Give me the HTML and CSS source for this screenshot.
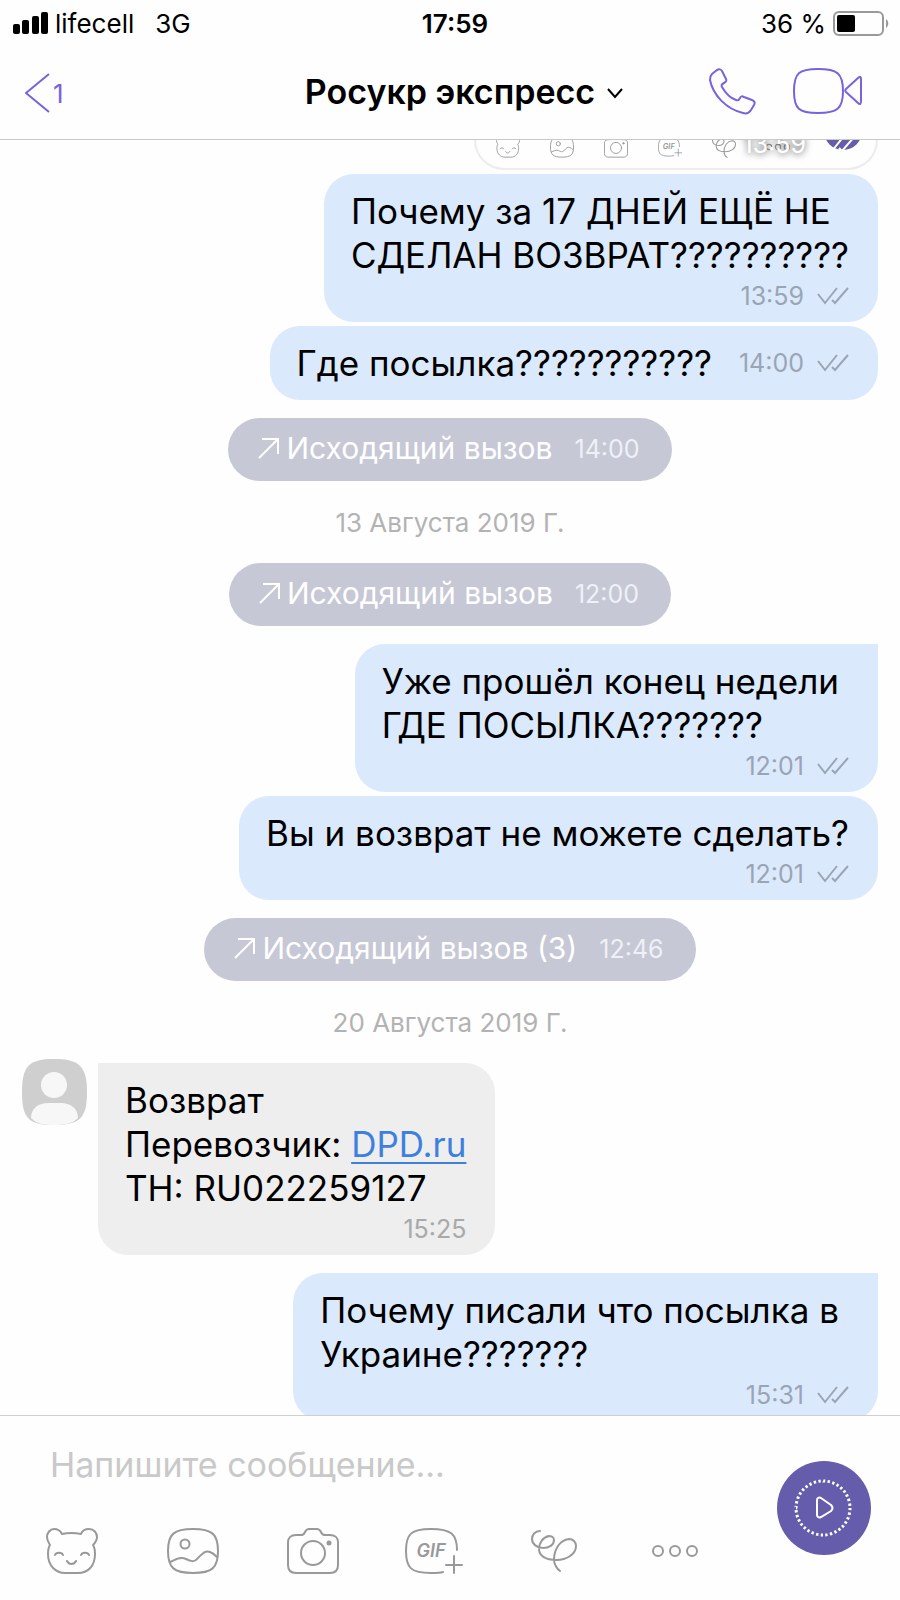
FILE: index.html
```html
<!DOCTYPE html>
<html lang="ru">
<head>
    <meta charset="UTF-8">
    <meta name="viewport" content="width=device-width, initial-scale=1.0">
    <title>Росукр экспресс</title>
    <link rel="stylesheet" href="styles.css">
</head>
<body>

    <!-- Shared icons -->
    <svg class="sprite" aria-hidden="true">
        <symbol id="icon-bear" viewBox="0 0 52 46">
            <path d="M16 6C14 2 11 1 8 1C4 1 1 5 1 9C1 13 3 15 4 17C2 20 2 23 2 26C2 38 10 45 19 45H32C42 45 49 38 49 26C49 23 49 20 47 17C49 15 51 13 51 9C51 5 48 1 43 1C39 1 36 3 35 6C30 5 21 5 16 6Z"/>
            <path d="M9 27C10 24 16 24 17 27M35 27C36 24 42 24 43 27M21 33C23 37 28 37 30 33"/>
        </symbol>
        <symbol id="icon-picture" viewBox="0 0 52 46">
            <path d="M1 23C1 6 7 1 26 1S51 6 51 23S45 45 26 45S1 40 1 23Z"/>
            <circle cx="18" cy="16" r="4.5"/>
            <path d="M3 34C8 32 13 28 19 31C23 33 27 35 31 30C35 26 38 22 43 24C46 25 48 27 50 29"/>
        </symbol>
        <symbol id="icon-camera" viewBox="0 0 52 46">
            <path d="M9 7H14C17 7 17 6 18 4C19 2 20 1 22 1H30C32 1 33 2 34 4C35 6 35 7 38 7H43C48 7 51 10 51 14V37C51 42 48 45 43 45H9C4 45 1 42 1 37V14C1 10 4 7 9 7Z"/>
            <circle cx="26" cy="25" r="12"/>
            <circle class="dot" cx="42" cy="15" r="1.5"/>
        </symbol>
        <symbol id="icon-gif" viewBox="0 0 58 46">
            <path d="M52 22C52 6 46 1 26 1S1 6 1 23S6 45 26 45C31 45 35 45 38 44M49 28V45M41 37H57"/>
            <text class="gif-text" x="26" y="29" text-anchor="middle">GIF</text>
        </symbol>
        <symbol id="icon-doodle" viewBox="0 0 46 42">
            <path d="M9 1C4 1 1 5 1 9C1 14 6 18 12 18C18 18 23 15 23 10C23 7 20 6 18 6C12 7 8 13 8 19C8 26 15 30 25 30C36 30 45 24 45 16C45 12 42 9 38 9C29 10 23 19 23 30C23 34 26 39 29 41"/>
        </symbol>
        <symbol id="icon-more" viewBox="0 0 46 12">
            <circle cx="6" cy="6" r="5"/>
            <circle cx="23" cy="6" r="5"/>
            <circle cx="40" cy="6" r="5"/>
        </symbol>
        <symbol id="icon-read" viewBox="0 0 32 18">
            <path d="M1 7L8 16L20 1M15 13L18 16L31 1"/>
        </symbol>
        <symbol id="icon-outgoing" viewBox="0 0 22 22">
            <path d="M1 21L20 2M4 2H20V17"/>
        </symbol>
    </svg>

    <header class="header">
        <div class="status-bar">
            <div class="status-left">
                <svg class="signal" viewBox="0 0 35 22" aria-hidden="true">
                    <rect x="0" y="12" width="7" height="10" rx="2"/>
                    <rect x="9" y="8" width="7" height="14" rx="2"/>
                    <rect x="19" y="4" width="7" height="18" rx="2"/>
                    <rect x="28" y="0" width="7" height="22" rx="2"/>
                </svg>
                <span>lifecell</span>
                <span class="network">3G</span>
            </div>
            <div class="clock">17:59</div>
            <div class="status-right">
                <span>36 %</span>
                <svg class="battery" viewBox="0 0 56 25" aria-hidden="true">
                    <rect class="battery-case" x="1" y="1" width="49" height="23" rx="5"/>
                    <rect x="4" y="4" width="18" height="17" rx="2"/>
                    <path class="battery-tip" d="M53 8C56 10 56 15 53 17Z"/>
                </svg>
            </div>
        </div>

        <div class="nav">
            <button class="back" type="button" aria-label="Назад">
                <svg class="icon-back" viewBox="0 0 26 40" aria-hidden="true">
                    <path d="M25 1L2 20L25 39"/>
                </svg>
                <span>1</span>
            </button>
            <h1 class="title">
                Росукр экспресс
                <svg class="chevron" viewBox="0 0 16 11" aria-hidden="true">
                    <path d="M1 1L8 9L15 1"/>
                </svg>
            </h1>
            <div class="nav-actions">
                <button type="button" aria-label="Позвонить">
                    <svg class="icon-phone" viewBox="0 0 47 47" aria-hidden="true">
                        <path d="M3 6L8 2C10 1 12 1 13 3L17 11C18 13 17 14 15 15C13 16 12 17 13 19C17 26 21 30 27 32C29 33 30 32 31 30C32 28 33 28 35 29L43 32C46 33 46 35 45 37L42 42C40 45 37 46 34 45C17 41 4 27 1 12C1 9 1 8 3 6Z"/>
                    </svg>
                </button>
                <button type="button" aria-label="Видеозвонок">
                    <svg class="icon-video" viewBox="0 0 70 46" aria-hidden="true">
                        <path d="M1 23C1 5 6 1 25 1S50 5 50 23S44 45 25 45S1 41 1 23Z"/>
                        <path d="M53 21L65 10C67 8 68 9 68 11V33C68 36 67 37 65 35L53 24C52 23 52 22 53 21Z"/>
                    </svg>
                </button>
            </div>
        </div>
    </header>

    <main class="chat">
        <div class="preview">
            <svg class="icon"><use href="#icon-bear"/></svg>
            <svg class="icon"><use href="#icon-picture"/></svg>
            <svg class="icon"><use href="#icon-camera"/></svg>
            <svg class="icon"><use href="#icon-gif"/></svg>
            <svg class="icon"><use href="#icon-doodle"/></svg>
            <svg class="icon"><use href="#icon-more"/></svg>
            <div class="preview-fab"></div>
            <div class="preview-meta">
                <span>13:59</span>
                <svg class="read"><use href="#icon-read"/></svg>
            </div>
        </div>

        <div class="bubble out">
            <p>Почему за 17 ДНЕЙ ЕЩЁ НЕ<br>СДЕЛАН ВОЗВРАТ??????????</p>
            <div class="meta">13:59 <svg class="read"><use href="#icon-read"/></svg></div>
        </div>
        <div class="bubble out inline">
            <p>Где посылка???????????</p>
            <div class="meta">14:00 <svg class="read"><use href="#icon-read"/></svg></div>
        </div>

        <div class="call">
            <svg class="outgoing"><use href="#icon-outgoing"/></svg>
            <span>Исходящий вызов</span>
            <span class="call-time">14:00</span>
        </div>
        <div class="date">13 Августа 2019 Г.</div>
        <div class="call">
            <svg class="outgoing"><use href="#icon-outgoing"/></svg>
            <span>Исходящий вызов</span>
            <span class="call-time">12:00</span>
        </div>

        <div class="bubble out first">
            <p>Уже прошёл конец недели<br>ГДЕ ПОСЫЛКА???????</p>
            <div class="meta">12:01 <svg class="read"><use href="#icon-read"/></svg></div>
        </div>
        <div class="bubble out">
            <p>Вы и возврат не можете сделать?</p>
            <div class="meta">12:01 <svg class="read"><use href="#icon-read"/></svg></div>
        </div>

        <div class="call">
            <svg class="outgoing"><use href="#icon-outgoing"/></svg>
            <span>Исходящий вызов (3)</span>
            <span class="call-time">12:46</span>
        </div>
        <div class="date">20 Августа 2019 Г.</div>

        <div class="incoming">
            <svg class="avatar" viewBox="0 0 65 66" aria-hidden="true">
                <path fill="#cfcfcf" d="M0 33C0 7 7 0 32 0S65 7 65 33S58 66 32 66S0 59 0 33Z"/>
                <circle fill="#f7f7f7" cx="32" cy="26" r="13"/>
                <path fill="#f7f7f7" d="M9 59C9 49 17 44 26 44H39C48 44 56 49 56 59C50 65 43 66 32 66S15 65 9 59Z"/>
            </svg>
            <div class="bubble in">
                <p>Возврат<br>Перевозчик: <a href="#">DPD.ru</a><br>ТН: RU022259127</p>
                <div class="meta">15:25</div>
            </div>
        </div>

        <div class="bubble out first">
            <p>Почему писали что посылка в<br>Украине???????</p>
            <div class="meta">15:31 <svg class="read"><use href="#icon-read"/></svg></div>
        </div>
    </main>

    <footer class="composer">
        <div class="composer-main">
            <input class="message-input" type="text" placeholder="Напишите сообщение..." aria-label="Напишите сообщение">
            <div class="toolbar">
                <button type="button" aria-label="Стикеры"><svg class="icon"><use href="#icon-bear"/></svg></button>
                <button type="button" aria-label="Галерея"><svg class="icon"><use href="#icon-picture"/></svg></button>
                <button type="button" aria-label="Камера"><svg class="icon"><use href="#icon-camera"/></svg></button>
                <button type="button" aria-label="GIF"><svg class="icon icon-wide"><use href="#icon-gif"/></svg></button>
                <button type="button" aria-label="Рисунок"><svg class="icon icon-doodle"><use href="#icon-doodle"/></svg></button>
                <button type="button" aria-label="Ещё"><svg class="icon icon-more"><use href="#icon-more"/></svg></button>
            </div>
        </div>
        <button class="record" type="button" aria-label="Записать видео">
            <svg viewBox="0 0 94 94" aria-hidden="true">
                <circle class="record-ring" cx="46" cy="47" r="27" pathLength="72"/>
                <path d="M40 39C40 37 42 36 44 37L54 44C56 46 56 48 54 50L44 56C42 57 40 56 40 54Z"/>
            </svg>
        </button>
    </footer>

</body>
</html>
```
FILE: styles.css
```css
* {
    margin: 0;
    padding: 0;
    box-sizing: border-box;
}

body {
    font-family: Inter, 'Liberation Sans', sans-serif;
    background-color: #fefefe;
    color: #000;
    height: 100vh;
    display: flex;
    flex-direction: column;
}

button {
    background: none;
    border: none;
    font: inherit;
    color: inherit;
    cursor: pointer;
}

svg {
    display: block;
    flex-shrink: 0;
}

.sprite {
    display: none;
}

/* Header */
.header {
    border-bottom: 1px solid #c8c8c8;
    flex-shrink: 0;
}

.status-bar {
    display: grid;
    grid-template-columns: 1fr auto 1fr;
    align-items: center;
    height: 46px;
    padding: 0 3px 0 13px;
    font-size: 26px;
}

.status-left, .status-right {
    display: flex;
    align-items: center;
    gap: 7px;
}

.status-right {
    justify-content: flex-end;
    padding-right: 8px;
}

.signal {
    width: 35px;
    height: 22px;
}

.network {
    margin-left: 14px;
}

.clock {
    font-weight: 600;
}

.battery {
    width: 56px;
    height: 25px;
}

.battery-case {
    fill: none;
    stroke: #999;
    stroke-width: 2;
}

.battery-tip {
    fill: #999;
}

.nav {
    display: flex;
    align-items: center;
    height: 93px;
    padding: 0 37px 3px 24px;
}

.back {
    display: flex;
    align-items: center;
    gap: 3px;
    flex: 0 0 195px;
    padding-top: 4px;
    font-size: 26px;
    color: #7863dc;
}

.icon-back {
    width: 26px;
    height: 40px;
}

.title {
    display: flex;
    align-items: center;
    justify-content: center;
    gap: 12px;
    flex: 1;
    font-size: 34px;
    font-weight: 600;
    white-space: nowrap;
}

.chevron {
    width: 16px;
    height: 11px;
    margin-top: 4px;
    fill: none;
    stroke: #000;
    stroke-width: 2;
}

.nav-actions {
    display: flex;
    align-items: center;
    gap: 37px;
}

.icon-back, .icon-phone, .icon-video {
    fill: none;
    stroke: #7863dc;
    stroke-width: 2;
    stroke-linejoin: round;
}

.icon-phone {
    width: 47px;
    height: 47px;
}

.icon-video {
    width: 70px;
    height: 46px;
}

/* Messages */
.chat {
    flex: 1;
    min-height: 0;
    overflow: hidden;
    display: flex;
    flex-direction: column;
    padding: 0 22px;
}

.chat > * {
    flex-shrink: 0;
}

.preview {
    position: relative;
    align-self: flex-end;
    display: flex;
    align-items: flex-end;
    gap: 30px;
    width: 404px;
    height: 30px;
    padding: 0 20px 10px;
    border: 2px solid #ececec;
    border-top: none;
    border-radius: 0 0 36px 36px;
    overflow: hidden;
}

.preview .icon {
    width: 24px;
    height: 22px;
}

.preview-fab {
    position: absolute;
    right: 14px;
    bottom: 18px;
    width: 38px;
    height: 38px;
    border-radius: 50%;
    background-color: #665cac;
}

.preview-meta {
    position: absolute;
    right: 20px;
    bottom: 10px;
    display: flex;
    align-items: center;
    gap: 18px;
    font-size: 25px;
    line-height: 28px;
    color: #fff;
    text-shadow: 0 1px 7px rgba(0, 0, 0, 0.7);
}

.bubble {
    padding: 15px 29px 12px 27px;
    border-radius: 30px;
    font-size: 35px;
    line-height: 44px;
    white-space: nowrap;
}

.out {
    align-self: flex-end;
    margin-top: 4px;
    background-color: #dbe9fd;
}

.in {
    background-color: #eee;
    border-top-left-radius: 0;
}

.in a {
    color: #3e80dd;
    text-decoration-thickness: 2px;
    text-underline-offset: 5px;
}

.first {
    margin-top: 18px;
    border-top-right-radius: 0;
}

.first p {
    padding-right: 10px;
}

.meta {
    display: flex;
    align-items: center;
    justify-content: flex-end;
    gap: 13px;
    margin-top: 5px;
    font-size: 25px;
    line-height: 28px;
    color: #9aa5b4;
}

.in .meta {
    color: #a9a9a9;
}

.inline {
    display: flex;
    align-items: center;
    gap: 27px;
    padding-bottom: 15px;
}

.inline .meta {
    margin-top: 0;
}

.read {
    width: 32px;
    height: 18px;
    fill: none;
    stroke: currentColor;
    stroke-width: 2;
}

.call {
    align-self: center;
    display: flex;
    align-items: center;
    height: 63px;
    margin-top: 18px;
    padding: 0 32px 4px 30px;
    border-radius: 32px;
    background-color: #c6c8d6;
    color: #fff;
    font-size: 30px;
}

.outgoing {
    width: 22px;
    height: 22px;
    margin-right: 6px;
    fill: none;
    stroke: #fff;
    stroke-width: 2;
}

.call-time {
    margin-left: 22px;
    padding-top: 2px;
    font-size: 25px;
    color: #eff0f8;
}

.date {
    margin-top: 19px;
    height: 45px;
    line-height: 45px;
    text-align: center;
    font-size: 26px;
    color: #b3b3b3;
}

.incoming {
    display: flex;
    align-items: flex-start;
    gap: 11px;
    margin-top: 14px;
}

.incoming .bubble {
    margin-top: 4px;
}

.avatar {
    width: 65px;
    height: 66px;
}

/* Composer */
.composer {
    display: flex;
    align-items: center;
    gap: 42px;
    flex-shrink: 0;
    height: 185px;
    padding: 0 29px 0 12px;
    border-top: 1px solid #ccd2d2;
}

.composer-main {
    flex: 1;
}

.message-input {
    display: block;
    width: 100%;
    height: 60px;
    padding: 0 38px;
    border: none;
    outline: none;
    background: none;
    font-family: inherit;
    font-size: 34px;
}

.message-input::placeholder {
    color: #c9c9c9;
    opacity: 1;
}

.toolbar {
    display: grid;
    grid-template-columns: repeat(6, 1fr);
    margin-top: 28px;
    padding-bottom: 2px;
}

.toolbar button {
    display: flex;
    align-items: center;
    justify-content: center;
    height: 58px;
}

.icon {
    width: 52px;
    height: 46px;
    fill: none;
    stroke: #999;
    stroke-width: 2;
    stroke-linecap: round;
    stroke-linejoin: round;
}

.icon-wide {
    width: 58px;
}

.icon-doodle {
    width: 46px;
    height: 42px;
}

.icon-more {
    width: 46px;
    height: 12px;
}

.dot, .gif-text {
    fill: #999;
}

.gif-text {
    stroke: none;
    font-size: 18px;
    font-style: italic;
    font-weight: 600;
}

.record {
    width: 94px;
    height: 94px;
    border-radius: 50%;
    background-color: #665cac;
}

.record svg {
    width: 94px;
    height: 94px;
    fill: none;
    stroke: #fff;
    stroke-width: 2;
}

.record .record-ring {
    stroke-dasharray: 1 1;
    stroke-width: 3;
}
```
